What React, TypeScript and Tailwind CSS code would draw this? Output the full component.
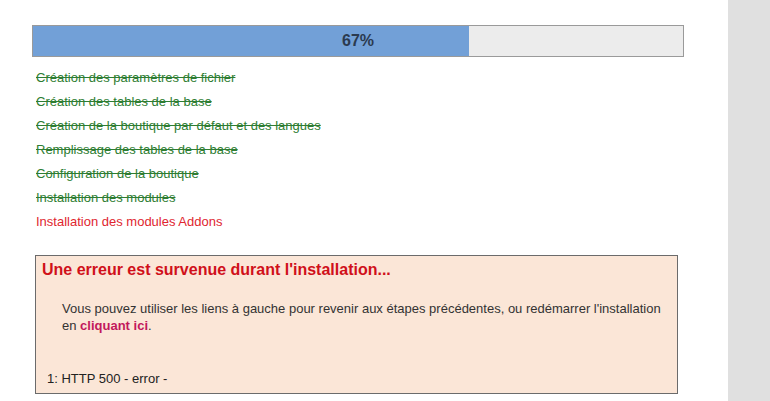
const steps = [
  "Création des paramètres de fichier",
  "Création des tables de la base",
  "Création de la boutique par défaut et des langues",
  "Remplissage des tables de la base",
  "Configuration de la boutique",
  "Installation des modules",
];

const App = () => {
  const progress = 67;
  return (
    <div className="flex h-[401px] w-[770px] overflow-hidden bg-white font-['Liberation_Sans',Arial,sans-serif]">
      <div className="flex-1 pl-[32px] pt-[25px]">
        <div className="relative h-[32px] w-[652px] border border-[#9a9a9a] bg-[#ececec]">
          <div className="h-full bg-[#72a0d7]" style={{ width: `${progress}%` }} />
          <div className="absolute inset-0 flex items-center justify-center text-[16px] font-bold text-[#2b3a4f]">
            {progress}%
          </div>
        </div>

        <ul className="mt-[9px] pl-[4px] text-[13px] leading-[24px]">
          {steps.map((s) => (
            <li key={s} className="text-[#2e7d32] line-through">
              {s}
            </li>
          ))}
          <li className="text-[#e0262f]">Installation des modules Addons</li>
        </ul>

        <div className="mt-[21px] ml-[3px] w-[643px] border border-[#6b6b6b] bg-[#fbe6d7] px-[6px] pt-[4px] pb-[6px]">
          <h2 className="text-[16px] leading-[20px] font-bold text-[#d0101a]">
            Une erreur est survenue durant l'installation...
          </h2>
          <p className="mt-[20px] ml-[20px] text-[13px] leading-[17px] text-[#333]">
            Vous pouvez utiliser les liens à gauche pour revenir aux étapes précédentes, ou redémarrer l'installation en{" "}
            <a className="cursor-pointer font-bold text-[#c2185b]">cliquant ici</a>.
          </p>
          <p className="mt-[36px] ml-[5px] text-[13px] leading-[17px] text-[#222]">1: HTTP 500 - error -</p>
        </div>
      </div>
      <div className="h-full w-[42px] bg-[#e0e0e0]" />
    </div>
  );
};

export default App;
